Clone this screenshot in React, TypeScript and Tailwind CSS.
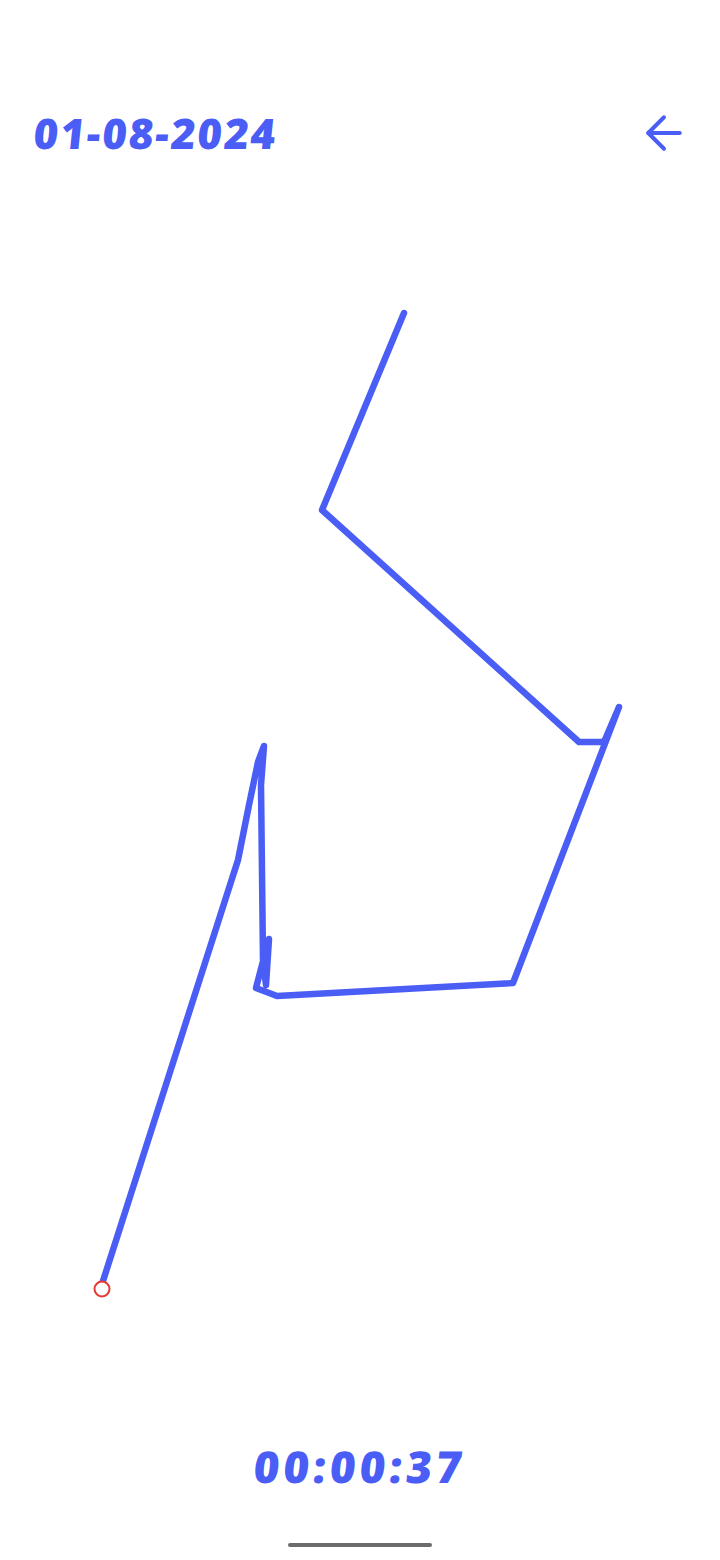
import { ArrowLeft } from 'lucide-react';

const trail =
  '404,313 322,510 579,742 604,742 619,707 513,983 277,996 256,988 262,965 269,939 266,985 263,960 261,785 264,746 258,762 249,805 238,860 103,1281';

export default function App() {
  return (
    <div className="w-[720px] h-[1560px] bg-white flex flex-col overflow-hidden">
      {/* header */}
      <div className="pt-[100px] h-[166px] px-[34px] flex items-center justify-between">
        <span className="text-[42px] leading-none font-extrabold tracking-[2px] -skew-x-6 text-[#4a5df5] [font-family:'Open_Sans',sans-serif]">
          01-08-2024
        </span>
        <ArrowLeft size={54} strokeWidth={1.75} className="text-[#4a5df5] mr-[-5px]" />
      </div>

      {/* recorded path */}
      <svg width="720" height="1250" viewBox="0 166 720 1250" className="block">
        <polyline
          points={trail}
          fill="none"
          stroke="#4a5df5"
          strokeWidth="6.5"
          strokeLinejoin="round"
          strokeLinecap="round"
        />
        <circle cx="102" cy="1289" r="7.5" fill="white" stroke="#e53935" strokeWidth="2" />
      </svg>

      {/* timer */}
      <div className="h-[100px] flex items-center justify-center">
        <span className="text-[44px] leading-none font-extrabold tracking-[4px] -skew-x-6 text-[#4a5df5] [font-family:'Open_Sans',sans-serif]">
          00:00:37
        </span>
      </div>

      <div className="mt-[27px] flex justify-center">
        <div className="w-[144px] h-[4px] rounded-full bg-[#6b6b6b]" />
      </div>
    </div>
  );
}
